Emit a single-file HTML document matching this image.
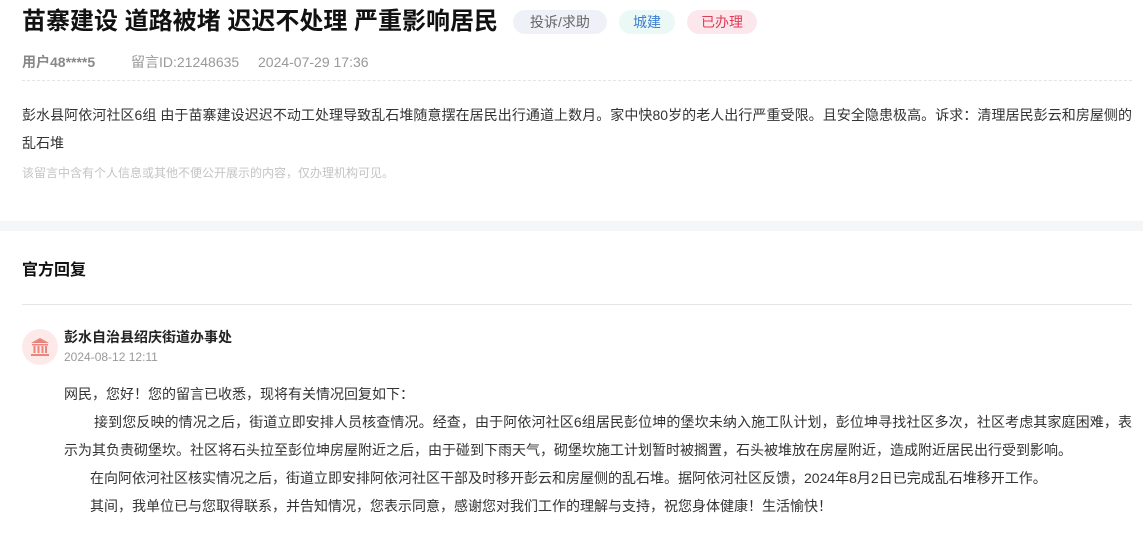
<!DOCTYPE html>
<html><head><meta charset="utf-8"><style>
*{margin:0;padding:0;box-sizing:border-box}
body{width:1143px;height:538px;overflow:hidden;background:#fff;font-family:"Liberation Sans","Noto Sans CJK SC",sans-serif;color:#333;position:relative}
.a{position:absolute;white-space:nowrap}
.j{position:absolute;text-align:justify;text-align-last:justify;white-space:nowrap;font-size:14px}
.tag{position:absolute;top:10px;height:24px;line-height:24px;border-radius:12px;font-size:14px;text-align:center}
</style></head><body>
<div class="a" style="left:22px;top:5px;font-size:24px;font-weight:bold;color:#111;line-height:34px">苗寨建设 道路被堵 迟迟不处理 严重影响居民</div>
<div class="tag" style="left:513px;width:94px;background:#eef2f8;color:#666">投诉/求助</div>
<div class="tag" style="left:619px;width:56px;background:#eaf8f6;color:#3f7fcf">城建</div>
<div class="tag" style="left:687px;width:70px;background:#fce8ec;color:#e23a55">已办理</div>
<div class="a" style="left:22px;top:52px;font-size:14px;line-height:20px;color:#999"><b style="color:#888">用户48****5</b></div>
<div class="a" style="left:131px;top:52px;font-size:14px;line-height:20px;color:#999">留言ID:21248635</div>
<div class="a" style="left:258px;top:52px;font-size:14px;line-height:20px;color:#999">2024-07-29 17:36</div>
<div style="position:absolute;left:22px;top:80px;width:1110px;border-top:1px dashed #e4e4e4"></div>
<div class="j" style="left:22px;top:104px;width:1110px;line-height:22px">彭水县阿依河社区6组 由于苗寨建设迟迟不动工处理导致乱石堆随意摆在居民出行通道上数月。家中快80岁的老人出行严重受限。且安全隐患极高。诉求：清理居民彭云和房屋侧的</div>
<div class="a" style="left:22px;top:132px;font-size:14px;line-height:22px">乱石堆</div>
<div class="a" style="left:22px;top:164px;font-size:12px;line-height:18px;color:#c4c4c4">该留言中含有个人信息或其他不便公开展示的内容，仅办理机构可见。</div>
<div style="position:absolute;left:0;top:221px;width:1143px;height:10px;background:#f5f6f8"></div>
<div class="a" style="left:22px;top:260px;font-size:16px;font-weight:bold;color:#111;line-height:22px">官方回复</div>
<div style="position:absolute;left:22px;top:304px;width:1110px;border-top:1px solid #e6e6e6"></div>
<div style="position:absolute;left:22px;top:329px;width:36px;height:36px;border-radius:50%;background:#fde9e8"></div>
<svg style="position:absolute;left:29px;top:336px" width="22" height="22" viewBox="0 0 22 22" fill="#e9857c"><path d="M11 2 L20 7 L2 7 Z"/><rect x="3" y="8" width="16" height="1.5"/><rect x="4.5" y="10" width="2" height="7"/><rect x="8.5" y="10" width="2" height="7"/><rect x="12.5" y="10" width="2" height="7"/><rect x="16" y="10" width="2" height="7"/><rect x="2" y="18" width="18" height="2"/></svg>
<div class="a" style="left:64px;top:327px;font-size:14px;font-weight:bold;color:#222;line-height:20px">彭水自治县绍庆街道办事处</div>
<div class="a" style="left:64px;top:348px;font-size:12px;color:#999;line-height:18px">2024-08-12 12:11</div>
<div class="a" style="left:64px;top:383px;font-size:14px;line-height:22px">网民，您好！您的留言已收悉，现将有关情况回复如下：</div>
<div class="j" style="left:94px;top:411px;width:1038px;line-height:22px">接到您反映的情况之后，街道立即安排人员核查情况。经查，由于阿依河社区6组居民彭位坤的堡坎未纳入施工队计划，彭位坤寻找社区多次，社区考虑其家庭困难，表</div>
<div class="a" style="left:64px;top:439px;font-size:14px;line-height:22px">示为其负责砌堡坎。社区将石头拉至彭位坤房屋附近之后，由于碰到下雨天气，砌堡坎施工计划暂时被搁置，石头被堆放在房屋附近，造成附近居民出行受到影响。</div>
<div class="a" style="left:90px;top:467px;font-size:14px;line-height:22px">在向阿依河社区核实情况之后，街道立即安排阿依河社区干部及时移开彭云和房屋侧的乱石堆。据阿依河社区反馈，2024年8月2日已完成乱石堆移开工作。</div>
<div class="a" style="left:90px;top:495px;font-size:14px;line-height:22px">其间，我单位已与您取得联系，并告知情况，您表示同意，感谢您对我们工作的理解与支持，祝您身体健康！生活愉快！</div>
</body></html>
